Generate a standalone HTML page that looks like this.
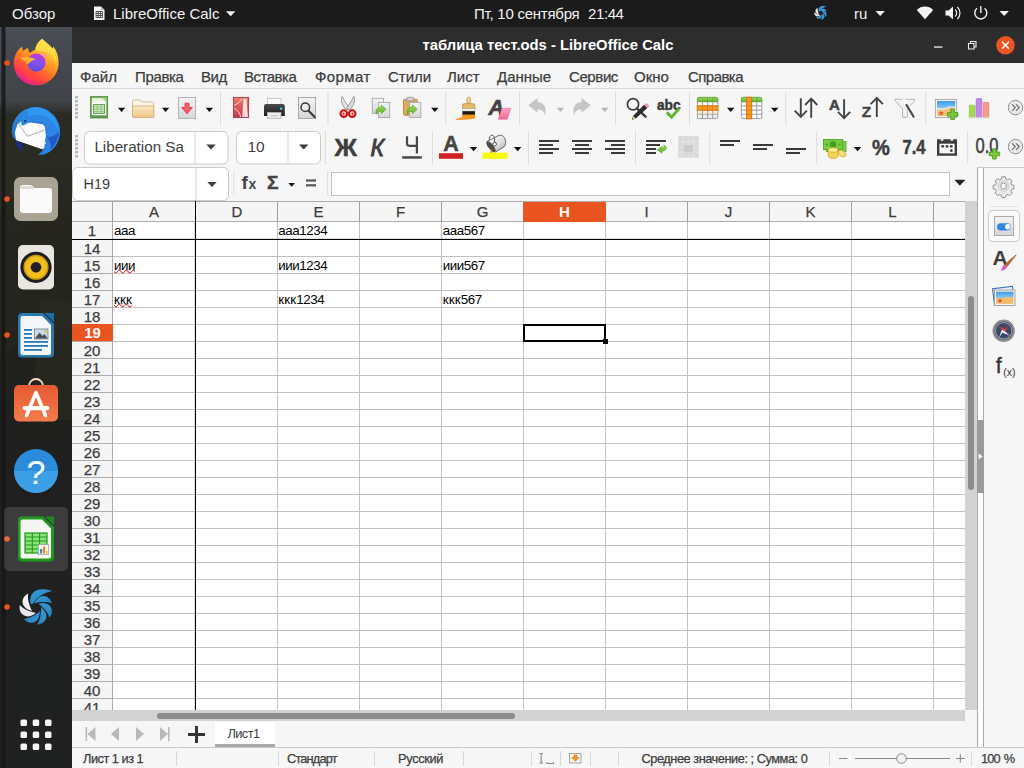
<!DOCTYPE html>
<html lang="ru"><head><meta charset="utf-8"><title>таблица тест.ods - LibreOffice Calc</title>
<style>
*{box-sizing:border-box;margin:0;padding:0}
html,body{width:1024px;height:768px;overflow:hidden;background:#2a2a2a;font-family:"Liberation Sans",sans-serif;}
body{position:relative}
.a{position:absolute}
svg{position:absolute;overflow:visible}
#topbar{position:absolute;left:0;top:0;width:1024px;height:27px;background:#1b1b1b;color:#f2f2f2;font-size:15px}
#topbar span{position:absolute;top:5px;white-space:nowrap}
#dock{position:absolute;left:0;top:27px;width:72px;height:741px;overflow:hidden;background:linear-gradient(#3b3f44 0px,#35383b 80px,#2b2c2a 180px,#282826 400px,#232323 741px)}
#title{position:absolute;left:72px;top:27px;width:952px;height:36px;background:#2e2d2d;color:#fff;font-weight:bold;font-size:14.8px;text-align:center;line-height:36px}
#menubar{position:absolute;left:72px;top:63px;width:952px;height:26px;background:#f6f6f6;border-bottom:1px solid #dcdad8;color:#3d3d3d;font-size:15px}
#menubar span{position:absolute;top:5px;white-space:nowrap}
#chrome{position:absolute;left:72px;top:89px;width:952px;height:679px;background:#f6f6f6}
/* grid */
#grid{position:absolute;left:72px;top:201px;width:893px;height:509px;background:#fff;overflow:hidden}
#colhdr{position:absolute;left:0;top:0;width:893px;height:21px;background:#f5f5f5;border-top:1px solid #acacac;border-bottom:1px solid #acacac}
#rowhdr{position:absolute;left:0;top:20px;width:41px;height:509px;background:#f5f5f5;border-right:1px solid #acacac}
.ch,.rh,#menubar span,#status span{-webkit-text-stroke:0.25px #3d3d3d}
.ch.sel,.rh.sel{-webkit-text-stroke:0}
.ch{position:absolute;top:0;height:19px;line-height:19px;text-align:center;font-size:15px;color:#3d3d3d}
.rh{position:absolute;left:0;width:40px;height:16px;line-height:17px;text-align:center;font-size:15px;color:#3d3d3d}
.vl{position:absolute;top:0;width:1px;height:509px;background:#c0c0c0}
.hl{position:absolute;left:0;height:1px;width:893px;background:#c0c0c0}
.ct{position:absolute;letter-spacing:-0.42px;font-size:13.33px;color:#000;white-space:nowrap;line-height:16px;height:16px}
.kk{letter-spacing:0.17px}
.sq{text-decoration:underline wavy #e00000 1px;text-underline-offset:-0.8px;text-decoration-skip-ink:none}
.sel{background:#e95420;color:#fff;font-weight:bold}
.sp{position:absolute;top:3px;width:1px;height:15px;background:#dadada}
</style></head><body>
<div id="topbar">
<span style="left:12px">Обзор</span>
<span style="left:113px">LibreOffice Calc</span>
<span style="left:474px;letter-spacing:-0.25px">Пт, 10 сентября</span><span style="left:588px;letter-spacing:-0.4px">21:44</span>
<span style="left:854px">ru</span>
<svg style="left:0;top:0" width="1024" height="27" viewBox="0 0 1024 27">
<path d="M94 6.500h7l3.500 3.500v10h-10.500z" fill="#f4f4f4"/><path d="M101 6.500l3.500 3.500h-3.500z" fill="#bdbdbd"/>
<path d="M96 11.500h6.500v6h-6.500zM96 13.500h6.500M96 15.500h6.500M98.200 11.500v6M100.400 11.500v6" fill="none" stroke="#333" stroke-width="0.800"/>
<path d="M226 11.300h9.400l-4.700 5z" fill="#f2f2f2"/>
<path d="M875.500 11h9.400l-4.700 5z" fill="#f2f2f2"/>
<path d="M999.500 11h9.400l-4.700 5z" fill="#f2f2f2"/>
<!-- shutter tray -->
<g transform="translate(820.600 13.200) scale(0.380)">
<path d="M-5.300 -3.800C-7 -9 -5 -15 0 -17.500C5 -19.500 11 -19 15.900 -16.900C9 -15.500 2 -12 -3 -4.500Z" fill="#3a9ad6"/>
<g id="bl2"><path d="M-1.900 -4.600C0 -9 4 -12.500 8 -12C12 -11.500 15 -8.500 15.900 -4.400C12 -6.300 5 -6.500 -1.900 -4.600Z"/></g>
<use href="#bl2" fill="#3a9ad6"/><use href="#bl2" fill="#3a9ad6" transform="rotate(51.430)"/><use href="#bl2" fill="#3a9ad6" transform="rotate(102.860)"/><use href="#bl2" fill="#3a9ad6" transform="rotate(154.290)"/>
<use href="#bl2" fill="#e6e6ea" transform="rotate(205.710)"/><use href="#bl2" fill="#f2f2f4" transform="rotate(257.140)"/>
</g>
<!-- wifi -->
<path d="M925 19.300l-8.200-9.300a11.500 11.500 0 0 1 16.400 0z" fill="#f2f2f2"/>
<!-- speaker -->
<path d="M945.500 10.500h3l4.500-4v13l-4.500-4h-3z" fill="#f2f2f2"/>
<path d="M955 9.500a4.500 4.500 0 0 1 0 7M957.300 7a8 8 0 0 1 0 12" fill="none" stroke="#f2f2f2" stroke-width="1.200"/>
<!-- power -->
<path d="M977 8.300a6 6 0 1 0 7.600 0" fill="none" stroke="#f2f2f2" stroke-width="1.400"/><path d="M980.800 6v7" stroke="#f2f2f2" stroke-width="1.400"/>
</svg>
</div>
<div id="dock">
<svg style="left:0;top:0" width="72" height="741" viewBox="0 27 72 741">
<defs>
<linearGradient id="wp" x1="0" y1="0" x2="0" y2="1"><stop offset="0" stop-color="#494d54"/><stop offset="0.100" stop-color="#404348"/><stop offset="0.118" stop-color="#2b2d27"/><stop offset="0.300" stop-color="#24251f"/><stop offset="0.550" stop-color="#1f201e"/><stop offset="1" stop-color="#202122"/></linearGradient>
<linearGradient id="ffg" x1="0.850" y1="0.100" x2="0.300" y2="1"><stop offset="0" stop-color="#ffe84e"/><stop offset="0.300" stop-color="#ffb02a"/><stop offset="0.550" stop-color="#ff7a22"/><stop offset="0.800" stop-color="#ff3a48"/><stop offset="1" stop-color="#ec1e9a"/></linearGradient>
<linearGradient id="ffp" x1="0.600" y1="0" x2="0.400" y2="1"><stop offset="0" stop-color="#c233dd"/><stop offset="0.450" stop-color="#8a50f2"/><stop offset="1" stop-color="#5a4ad8"/></linearGradient>
<linearGradient id="tbg" x1="0.300" y1="0" x2="0.600" y2="1"><stop offset="0" stop-color="#2f8ee0"/><stop offset="1" stop-color="#1a4fb0"/></linearGradient>
<linearGradient id="swg" x1="0" y1="0" x2="0" y2="1"><stop offset="0" stop-color="#e65a30"/><stop offset="1" stop-color="#f27c4c"/></linearGradient>
<linearGradient id="shg" x1="0" y1="0" x2="1" y2="1"><stop offset="0" stop-color="#3a9cd6"/><stop offset="1" stop-color="#2380bc"/></linearGradient>
</defs>
<rect x="0" y="27" width="72" height="741" fill="url(#wp)"/>
<path d="M0 118c20-6 45-10 72-4v40c-30 10-50 30-72 60z" fill="#2a2c24"/>
<path d="M0 240l72-40v90l-72 70z" fill="#26271f" opacity="0.700"/>
<path d="M40 300h32v120h-40z" fill="#2b2d20" opacity="0.500"/>
<rect x="1.500" y="27" width="4" height="741" fill="#161616" opacity="0.850"/>
<!-- running dots -->
<g fill="#e95420"><circle cx="7" cy="63" r="2.800"/><circle cx="7" cy="199" r="2.800"/><circle cx="7" cy="335" r="2.800"/><circle cx="7" cy="539" r="2.800"/><circle cx="7" cy="607" r="2.800"/></g>
<!-- firefox -->
<path d="M42.300 38.700C45 42 50 45 52.500 48.600C53.300 48.300 53.200 47.300 53 46.300C57 51 58.600 57 58.600 63C58.600 75.500 48.500 85.200 36.100 85.200C23.500 85.200 13.800 75.500 13.800 63.200C13.800 56 17 50 22.200 46.400C22.400 48.500 22.800 50 23.300 51.100C24.500 49.500 26 48.500 28 47.900C28.300 50 29 51.500 29.900 53C31.500 51.500 33.500 50.300 35.400 49.700C35.500 45.500 38.500 41.500 42.300 38.700Z" fill="url(#ffg)"/>
<path d="M42.300 38.700C45 42 50 45 52.500 48.600C55.500 53 57 58 56 64C54 56 49 51 44 51.500C40 52 36 51 35.400 49.700C35.500 45.500 38.500 41.500 42.300 38.700Z" fill="#ffe14a" opacity="0.750"/>
<circle cx="36.400" cy="62.600" r="9.200" fill="url(#ffp)"/>
<path d="M20 58.300C24 56.300 30 56.800 35.900 59.200C32.500 60 29.500 62 27.300 64.800C26 62 23.500 59.800 20 58.300Z" fill="#ffb52e"/>
<path d="M27.300 64.800C25.500 69 28 74.500 34 76.300C40 77.800 46 74 47.300 68C47 74.500 42 80 35 80C27 80 21.500 73.500 22.500 66C23 63 24.500 60.500 27 59.500C28.500 60.500 28 62.500 27.300 64.800Z" fill="#ff5a30" opacity="0.350"/>
<path d="M40 54.200C42.500 53.600 45 54.600 46.500 56.200L42.500 56.500Z" fill="#ff8adc"/>
<!-- thunderbird -->
<path d="M12.600 137A24 24 0 1 1 38 154.900L43.500 149L16 140Z" fill="url(#tbg)"/>
<path d="M15.300 141C16.300 146 19 149.500 22.800 150.500L21.500 144Z" fill="#1b2c94"/>
<path d="M17.500 124.200L21.500 121.200L43 124.200L45 127L46.800 143.800L43 149.400L16 140.200L14.900 132.200Z" fill="#fdfdff"/>
<path d="M19 124.300L27.300 136.200L44.500 130.400" fill="none" stroke="#a9a196" stroke-width="0.900"/>
<path d="M21.900 125.600C20.500 121 21.500 115 25.500 111C30 107 38 106.500 45 109.500C54 113.500 60 122 60 132C60 142 54 151 44 154.500L38 154.900C42 152.500 44.500 149.500 45.500 146.500C43.500 147.500 44.500 144.500 46 142.500C44.500 142.500 44.500 140 46 137C47.500 131 45.500 125 41 122.500C36 120.500 30 121.500 26 124C24.500 125 23 125.800 21.900 125.600Z" fill="#2b86e4"/>
<path d="M30 108.100C36 106 44 108 50 113C56 118.500 59.500 126 59 134C57 126 52 119.500 45 116.500C39 114 33 114.500 28.500 117C27 114 28 110.500 30 108.100Z" fill="#2f9cf0" opacity="0.850"/>
<path d="M46 137C49 139 52 144 50 150C54.500 146 58.500 139 59 132C55 136 50 137.500 46 137Z" fill="#1d4fc0" opacity="0.800"/>
<circle cx="25.300" cy="120.900" r="1" fill="#0a1f4a"/>
<!-- files -->
<rect x="14" y="177" width="44" height="44" rx="6.500" fill="#a9a394"/>
<path d="M20 188q0-3 3-3h7q2 0 3 1.500l1 1.500h15q3 0 3 3v19q0 3-3 3h-26q-3 0-3-3z" fill="#fafafa"/>
<path d="M20 189q0-3 3-3h7q2 0 3 1.500l1 1.500h-14z" fill="#e0ddd4"/>
<!-- rhythmbox -->
<rect x="18" y="245" width="36" height="44.500" rx="5" fill="#e8e6df"/>
<circle cx="36" cy="267.300" r="15.600" fill="#1d1d22"/>
<circle cx="36" cy="267.300" r="11.800" fill="#f2c01e"/>
<circle cx="36" cy="267.300" r="11.800" fill="none" stroke="#c89a10" stroke-width="1.500"/>
<circle cx="36" cy="267.300" r="5.300" fill="#222226"/>
<!-- writer -->
<path d="M22 313h21l11 11v29.500q0 4-4 4h-28q-4 0-4-4v-36.500q0-4 4-4z" fill="#2678ae"/>
<path d="M22.500 316h19.500l9 9v28q0 2-2 2h-26.500q-2 0-2-2v-35q0-2 2-2z" fill="#f4f8fb"/>
<path d="M44.500 313h9.500v9.500z" fill="#1c6aa6"/>
<g fill="#2a78b0"><rect x="24" y="329" width="8" height="1.800"/><rect x="24" y="333" width="8" height="1.800"/><rect x="24" y="337" width="8" height="1.800"/><rect x="24" y="341" width="24" height="1.800"/><rect x="24" y="345" width="24" height="1.800"/><rect x="24" y="349" width="18" height="1.800"/></g>
<rect x="34.500" y="329" width="13.500" height="10" fill="#c9dcea" stroke="#5a6a78" stroke-width="0.700"/>
<path d="M35 338.500l4.500-6l3 3.500l2-2l3.200 4.500z" fill="#4a4f55"/><circle cx="45.500" cy="331.500" r="1.200" fill="#f2c01e"/>
<!-- software -->
<path d="M29 387v-1a7 7 0 0 1 14 0v1" fill="none" stroke="#f6dcc0" stroke-width="1.800"/>
<rect x="14" y="385" width="44" height="36.500" rx="5" fill="url(#swg)"/>
<path d="M36 392.500l-9.500 23M36 392.500l9.500 23" stroke="#fff" stroke-width="3.600" fill="none" stroke-linecap="round"/>
<rect x="22.500" y="406" width="27" height="4.200" rx="2.100" fill="#fff"/>
<!-- help -->
<circle cx="36" cy="471" r="22" fill="#2a8cda"/>
<path d="M14 471a22 22 0 0 0 44 0z" fill="#3d9fe6"/>
<text x="36" y="484" text-anchor="middle" font-family="Liberation Sans,sans-serif" font-size="34" fill="#fff">?</text>
<!-- calc (active) -->
<rect x="4" y="507" width="64" height="64" rx="5" fill="#fff" fill-opacity="0.130"/>
<path d="M22 516.500h21l11 11v30q0 4-4 4h-28q-4 0-4-4v-37q0-4 4-4z" fill="#1f9a1c"/>
<path d="M22.500 519.500h19.500l9 9v28q0 2-2 2h-26.500q-2 0-2-2v-35q0-2 2-2z" fill="#f3f6f1"/>
<path d="M45 516.500h9v9z" fill="#1a8a18"/>
<rect x="25" y="533" width="22" height="20" fill="#8ee07a" stroke="#1f9a1c" stroke-width="1.200"/>
<path d="M25 537h22M25 541h22M25 545h22M25 549h22M32.300 533v20M39.600 533v20" stroke="#1f9a1c" stroke-width="1.100"/>
<rect x="38.500" y="544.500" width="10" height="10" fill="#f4f4f4" stroke="#9a9a9a" stroke-width="0.700"/>
<rect x="40" y="549" width="2.200" height="4.500" fill="#2a8cda"/><rect x="43" y="546.500" width="2.200" height="7" fill="#f08a10"/><rect x="46" y="551" width="1.600" height="2.500" fill="#f2c01e"/>
<!-- shutter -->
<g transform="translate(36.100 608)">
<path d="M-5.300 -3.800C-7 -9 -5 -15 0 -17.500C5 -19.500 11 -19 15.900 -16.900C9 -15.500 2 -12 -3 -4.500Z" fill="url(#shg)"/>
<g id="bl"><path d="M-1.900 -4.600C0 -9 4 -12.500 8 -12C12 -11.500 15 -8.500 15.900 -4.400C12 -6.300 5 -6.500 -1.900 -4.600Z"/></g>
<use href="#bl" fill="url(#shg)"/><use href="#bl" fill="url(#shg)" transform="rotate(51.430)"/><use href="#bl" fill="url(#shg)" transform="rotate(102.860)"/><use href="#bl" fill="url(#shg)" transform="rotate(154.290)"/>
<use href="#bl" fill="#e6e6ea" transform="rotate(205.710)"/><use href="#bl" fill="#f2f2f4" transform="rotate(257.140)"/>
</g>
<!-- apps grid -->
<g fill="#f4f4f4"><rect x="20.500" y="719.500" width="6.500" height="6.500" rx="1.500"/><rect x="32.700" y="719.500" width="6.500" height="6.500" rx="1.500"/><rect x="45" y="719.500" width="6.500" height="6.500" rx="1.500"/><rect x="20.500" y="731.500" width="6.500" height="6.500" rx="1.500"/><rect x="32.700" y="731.500" width="6.500" height="6.500" rx="1.500"/><rect x="45" y="731.500" width="6.500" height="6.500" rx="1.500"/><rect x="20.500" y="743.500" width="6.500" height="6.500" rx="1.500"/><rect x="32.700" y="743.500" width="6.500" height="6.500" rx="1.500"/><rect x="45" y="743.500" width="6.500" height="6.500" rx="1.500"/></g>
</svg>
</div>
<div id="title">таблица тест.ods - LibreOffice Calc</div>
<div id="menubar">
<span style="left:8px">Файл</span><span style="left:63px;letter-spacing:-0.35px">Правка</span><span style="left:129px;letter-spacing:-0.4px">Вид</span><span style="left:172px;letter-spacing:-0.5px">Вставка</span><span style="left:243px;letter-spacing:0.4px">Формат</span><span style="left:316px">Стили</span><span style="left:375px">Лист</span><span style="left:425px">Данные</span><span style="left:497px;letter-spacing:-0.4px">Сервис</span><span style="left:562px">Окно</span><span style="left:616px;letter-spacing:-0.55px">Справка</span>
</div>
<svg style="left:920px;top:27px" width="104" height="36" viewBox="920 27 104 36">
<rect x="934" y="46.400" width="8.500" height="1.300" fill="#f0f0f0"/>
<path d="M968.500 43.500h5.500v5.500h-5.500zM970.500 43.500v-2h5.500v5.500h-2" fill="none" stroke="#f0f0f0" stroke-width="1.100"/>
<circle cx="1005.500" cy="45.300" r="9.300" fill="#e95420"/>
<path d="M1002 41.800l7 7M1009 41.800l-7 7" stroke="#fff" stroke-width="1.500"/>
</svg>
<div id="chrome"></div>
<svg id="tb" style="left:72px;top:89px" width="952" height="112" viewBox="72 89 952 112">
<defs>
<linearGradient id="gGreen" x1="0" y1="0" x2="0" y2="1"><stop offset="0" stop-color="#9be05a"/><stop offset="1" stop-color="#5fae2c"/></linearGradient>
<linearGradient id="gFold" x1="0" y1="0" x2="0" y2="1"><stop offset="0" stop-color="#fbe8c4"/><stop offset="1" stop-color="#eec58a"/></linearGradient>
<linearGradient id="gGrey" x1="0" y1="0" x2="0" y2="1"><stop offset="0" stop-color="#f4f4f4"/><stop offset="1" stop-color="#d6d6d6"/></linearGradient>
<linearGradient id="gPdf" x1="0" y1="0" x2="0" y2="1"><stop offset="0" stop-color="#ee7a66"/><stop offset="1" stop-color="#c5384a"/></linearGradient>
<linearGradient id="gPrn" x1="0" y1="0" x2="0" y2="1"><stop offset="0" stop-color="#4a4a4a"/><stop offset="1" stop-color="#1c1c1c"/></linearGradient>
<linearGradient id="gPink" x1="0" y1="0" x2="0" y2="1"><stop offset="0" stop-color="#ffa3c4"/><stop offset="1" stop-color="#f0699c"/></linearGradient>
<linearGradient id="gSky" x1="0" y1="0" x2="0" y2="1"><stop offset="0" stop-color="#3d9be9"/><stop offset="1" stop-color="#8ccbf5"/></linearGradient>
<linearGradient id="gDoc" x1="0" y1="0" x2="0" y2="1"><stop offset="0" stop-color="#d4e9c6"/><stop offset="0.350" stop-color="#ffffff"/><stop offset="1" stop-color="#ffffff"/></linearGradient>
<linearGradient id="gCan" x1="0.200" y1="0" x2="0.900" y2="0.800"><stop offset="0" stop-color="#fafafa"/><stop offset="0.600" stop-color="#e2e2e2"/><stop offset="1" stop-color="#bcbcbc"/></linearGradient>
<path id="dd" d="M-3.7 -2.1h7.4l-3.7 4.3z"/>
<g id="garrow"><path d="M0 0c3.5-3 8-2.5 10 0.500l1.800-1.800l0.300 6.500l-6.500-0.300l1.900-1.900c-1.500-2.200-4.500-2.800-7.500-3z" fill="url(#gGreen)" stroke="#4e9a1e" stroke-width="0.600"/></g>
</defs>
<!-- ===== row 1 ===== -->
<g id="row1">
<g fill="#b9b9b9"><rect x="75" y="96" width="3" height="2.500"/><rect x="75" y="100" width="3" height="2.500"/><rect x="75" y="104" width="3" height="2.500"/><rect x="75" y="108" width="3" height="2.500"/><rect x="75" y="112" width="3" height="2.500"/><rect x="75" y="116" width="3" height="2.500"/></g>
<!-- new spreadsheet -->
<rect x="90.900" y="96.900" width="16.300" height="20.700" fill="url(#gDoc)" stroke="#5b9648" stroke-width="1.700"/>
<path d="M101.800 97.700h4.700v4.700z" fill="#a9cf93"/>
<rect x="93.600" y="104.600" width="11" height="8.800" fill="#e2f4d6" stroke="#62a04a" stroke-width="1.100"/>
<path d="M93.600 106.900h11M93.600 109.100h11M93.600 111.300h11M97.300 104.600v8.800M101 104.600v8.800" stroke="#7db567" stroke-width="0.800"/>
<rect x="91.700" y="115.300" width="14.700" height="2" fill="#5b9648"/>
<use href="#dd" x="121.600" y="109.900" fill="#111"/>
<!-- folder -->
<path d="M132.500 101.500q0-1.500 1.500-1.500h5.500q1.200 0 1.500 1l0.400 1h11q1.300 0 1.300 1.300v13q0 1.200-1.200 1.200h-18.800q-1.200 0-1.200-1.200z" fill="#fdf6e8" stroke="#c8b48e" stroke-width="0.900"/>
<path d="M132.500 106h21.200v10.300q0 1.200-1.200 1.200h-18.800q-1.200 0-1.200-1.200z" fill="url(#gFold)" stroke="#d2b07a" stroke-width="0.900"/>
<use href="#dd" x="165.600" y="109.900" fill="#111"/>
<!-- save -->
<rect x="178.500" y="97.500" width="17" height="21" fill="url(#gGrey)" stroke="#b4b4b4" stroke-width="1"/>
<path d="M185 103.200h4v4.300h3.300l-5.300 6.300l-5.300-6.300h3.300z" fill="#f0606a" stroke="#d83a48" stroke-width="0.900" stroke-linejoin="round"/>
<use href="#dd" x="209.400" y="109.900" fill="#111"/>
<rect x="220" y="92" width="1" height="33" fill="#dcdcdc"/>
<!-- pdf -->
<rect x="233.500" y="97.400" width="15.100" height="20.100" fill="url(#gPdf)" stroke="#b23245" stroke-width="0.900"/>
<path d="M234.200 105.200C237.500 104 240.500 101.500 241.900 98.800M234.200 108.400C237.500 110 240 113 240.700 117.100" stroke="#fff" stroke-opacity="0.850" fill="none" stroke-width="0.900"/>
<path d="M243.500 98.800h2.900l1.600 18.300h-5.800z" fill="#fff" fill-opacity="0.800"/>
<!-- printer -->
<rect x="267.500" y="98.300" width="13.500" height="7" fill="#fafafa" stroke="#bdbdbd" stroke-width="0.800"/>
<path d="M266 104h16.500q2.300 0 2.300 2.300v9.600h-20.800v-9.600q0-2.300 2-2.300z" fill="url(#gPrn)"/>
<rect x="267.500" y="112.500" width="13.500" height="6" fill="#ececec" stroke="#b5b5b5" stroke-width="0.800"/>
<rect x="270.500" y="115.300" width="7.500" height="1" fill="#bdbdbd"/>
<rect x="280" y="107.500" width="2.300" height="2.300" fill="#35c4ee"/>
<!-- preview -->
<rect x="298.500" y="97.500" width="17" height="21" fill="url(#gGrey)" stroke="#a9a9a9" stroke-width="1"/>
<circle cx="305.300" cy="107.300" r="4.300" fill="#ebebeb" stroke="#3a3a3a" stroke-width="1.500"/>
<path d="M308.600 110.700l6 6.200" stroke="#3a3a3a" stroke-width="2.200" stroke-linecap="round"/>
<rect x="327.500" y="92" width="1" height="33" fill="#dcdcdc"/>
<!-- scissors -->
<path d="M342.300 96.300C340.600 99.500 341 103.500 346.300 110.300L349.600 108.200C346.200 104 343.800 100 342.300 96.300Z" fill="#e6e6e6" stroke="#8a8a8a" stroke-width="0.800" stroke-linejoin="round"/>
<path d="M353.700 96.300C355.400 99.500 355 103.500 349.700 110.300L346.400 108.200C349.800 104 352.200 100 353.700 96.300Z" fill="#dadada" stroke="#8a8a8a" stroke-width="0.800" stroke-linejoin="round"/>
<circle cx="343.800" cy="113.600" r="3.300" fill="#f6dada" stroke="#cc1616" stroke-width="2.100"/>
<circle cx="352.200" cy="113.600" r="3.300" fill="#f6dada" stroke="#cc1616" stroke-width="2.100"/>
<path d="M342.800 112.300l2.200 1.300l-2.200 1.300zM353.200 112.300l-2.200 1.300l2.200 1.300z" fill="#cc1616"/>
<!-- copy -->
<rect x="372.300" y="98.300" width="11.200" height="15" fill="url(#gGrey)" stroke="#a9a9a9" stroke-width="0.900"/>
<rect x="378.500" y="102.500" width="11.200" height="15" fill="url(#gGrey)" stroke="#a9a9a9" stroke-width="0.900"/>
<path d="M376.300 114.300c-1.500-4 1-7.500 5-7.200v-2.200l4.800 4.400l-4.800 4.400v-2.300c-2.200-0.300-4 0.700-5 2.900z" fill="url(#gGreen)" stroke="#56a526" stroke-width="0.600"/>
<!-- paste -->
<rect x="403.500" y="99.300" width="14" height="16" rx="1.200" fill="#dfa95a" stroke="#b98742" stroke-width="0.900"/>
<rect x="407" y="97.300" width="7" height="3.600" rx="1" fill="#d2d2d2" stroke="#8f8f8f" stroke-width="0.800"/>
<rect x="409.600" y="102.500" width="11.200" height="15" fill="url(#gGrey)" stroke="#a9a9a9" stroke-width="0.900"/>
<path d="M407.500 114.300c-1.500-4 1-7.500 5-7.200v-2.200l4.800 4.400l-4.800 4.400v-2.300c-2.200-0.300-4 0.700-5 2.900z" fill="url(#gGreen)" stroke="#56a526" stroke-width="0.600"/>
<use href="#dd" x="434.800" y="109.900" fill="#111"/>
<rect x="445.300" y="92" width="1" height="33" fill="#dcdcdc"/>
<!-- clone brush -->
<path d="M467 99.500a1.800 1.800 0 1 1 3.400 0l-0.300 4.300h-2.800z" fill="#f1cf8c" stroke="#b9904a" stroke-width="0.800"/>
<path d="M462.500 105.500q0-1.800 1.800-1.800h8.800q1.800 0 1.800 1.800v3.200h-12.400z" fill="#e9b968" stroke="#b9904a" stroke-width="0.800"/>
<rect x="462.400" y="108.600" width="12.600" height="2.600" fill="#f3efe6" stroke="#b0a58c" stroke-width="0.500"/>
<rect x="462.400" y="111.200" width="12.600" height="3.800" fill="#1c1a18"/>
<path d="M462.400 114.800h12.600v3.200c-4 1.300-9 1.200-13.500 1.400c-2.500 0.200-4.500 0.300-5.600 0c1.500-1.300 4.500-1.200 6.500-2z" fill="#f59a1c" stroke="#e0800e" stroke-width="0.500"/>
<!-- clear formatting -->
<text x="488.500" y="115" font-family="Liberation Sans,sans-serif" font-weight="bold" font-style="italic" font-size="21.500" fill="#454545" stroke="#454545" stroke-width="0.700">A</text>
<path d="M502 108.300h8.600l-3.300 10.900h-8.900z" fill="url(#gPink)" stroke="#e85a90" stroke-width="0.600"/>
<rect x="519" y="92" width="1" height="33" fill="#dcdcdc"/>
<!-- undo / redo -->
<path id="undo" d="M528.300 105.300l9.300-7.200v4.200c6.500 0.200 9.800 5.500 7.300 13.300c-0.800-4.500-3-6.200-7.300-6.200v3.300z" fill="#c6c6c6"/>
<use href="#dd" x="560.500" y="109.800" fill="#b5b5b5"/>
<use href="#undo" transform="translate(1119.100 0) scale(-1 1)"/>
<use href="#dd" x="604.700" y="109.800" fill="#b5b5b5"/>
<rect x="615" y="92" width="1" height="33" fill="#dcdcdc"/>
<!-- find & replace -->
<circle cx="633" cy="104.300" r="5.600" fill="#fafafa" stroke="#3a3a3a" stroke-width="1.700"/>
<path d="M637 108.500l8.600 8.200" stroke="#3a3a3a" stroke-width="2.400" stroke-linecap="round"/>
<path d="M644 104.700l3.300 3.200l-11.500 10.700l-3.600 1l0.800-3.700z" fill="#2c2c2c"/>
<path d="M644.200 104.500l1.200-1q1-0.700 1.900 0.200l1.400 1.400q0.800 1 0 1.800l-1.200 1.100z" fill="#f08fc0"/>
<path d="M632.200 119.600l0.800-3.700l2.800 2.700z" fill="#e8d27a"/><path d="M632.200 119.600l0.300-1.600l1.200 1.200z" fill="#222"/>
<!-- spelling -->
<text x="657" y="109.500" font-family="Liberation Sans,sans-serif" font-weight="bold" font-size="15.500" fill="#3a3a3a" stroke="#3a3a3a" stroke-width="0.500" textLength="23.500" lengthAdjust="spacingAndGlyphs">abc</text>
<path d="M666.800 112.300l4.800 4.800l8-9" fill="none" stroke="#5cb32c" stroke-width="2.800"/>
<rect x="689" y="92" width="1" height="33" fill="#dcdcdc"/>
<!-- rows -->
<g id="tbl"><rect x="697.400" y="97.400" width="20.400" height="21.200" rx="1.500" fill="#fff" stroke="#9e9e9e" stroke-width="1"/>
<path d="M697.400 101.600h20.400M697.400 105.900h20.400M697.400 110.100h20.400M697.400 114.300h20.400M702.500 97.400v21.200M707.600 97.400v21.200M712.700 97.400v21.200" stroke="#a6a6a6" stroke-width="1.100" fill="none"/>
<path d="M698.900 97.400h17.400q1.500 0 1.500 1.500v2.700h-20.400v-2.700q0-1.500 1.500-1.500z" fill="url(#gGreen)" stroke="#62ab36" stroke-width="0.800"/>
<path d="M702.500 97.600v4M707.600 97.600v4M712.700 97.600v4" stroke="#5ea832" stroke-width="0.800"/></g>
<rect x="698.200" y="110.700" width="18.800" height="3.100" fill="#f79a22" fill-opacity="0.180"/><rect x="698.200" y="114.900" width="18.800" height="3.100" fill="#000" fill-opacity="0.070"/><rect x="742.200" y="114.900" width="18.800" height="3.100" fill="#000" fill-opacity="0.070"/>
<rect x="697.200" y="105.800" width="20.800" height="4.400" fill="#f79a22" stroke="#dc750c" stroke-width="0.900"/>
<path d="M702.500 106v4M707.600 106v4M712.700 106v4" stroke="#dc750c" stroke-width="0.800"/>
<use href="#dd" x="730.700" y="109.900" fill="#111"/>
<use href="#tbl" x="44" y="0"/>
<rect x="746.500" y="97.200" width="5.200" height="21.600" fill="#f79a22" stroke="#dc750c" stroke-width="0.900"/>
<path d="M746.500 101.600h5.200M746.500 105.900h5.200M746.500 110.100h5.200M746.500 114.300h5.200" stroke="#dc750c" stroke-width="0.800"/>
<use href="#dd" x="774.700" y="109.900" fill="#111"/>
<rect x="785.200" y="92" width="1" height="33" fill="#dcdcdc"/>
<!-- sort -->
<g fill="none" stroke="#444" stroke-width="1.900">
<path d="M800.800 98.300v18.500M794.700 110.700l6.100 6.300l6.100-6.300"/>
<path d="M811.200 117.800v-18.500M805.100 105l6.100-6.300l6.100 6.300"/>
<path d="M844.100 99.300v18.500M838 111.800l6.100 6.300l6.100-6.300"/>
<path d="M876.800 116.900v-18.500M870.700 104.200l6.100-6.300l6.100 6.300"/>
</g>
<text x="829" y="109.500" font-family="Liberation Sans,sans-serif" font-weight="bold" font-size="15" fill="#444" stroke="#444" stroke-width="0.500">A</text>
<text x="861.700" y="117.300" font-family="Liberation Sans,sans-serif" font-weight="bold" font-size="15.500" fill="#444" stroke="#444" stroke-width="0.400">Z</text>
<!-- autofilter -->
<path d="M895.200 99.300h19.400v1.500l-7.300 8v8.500h-4.800v-8.500l-7.300-8z" fill="#f2f2f2" stroke="#b0b0b0" stroke-width="0.900"/>
<path d="M903 99l10.500 17.500" stroke="#fff" stroke-width="3.400"/>
<path d="M906.500 105l7 11.500" stroke="#4a4a4a" stroke-width="2.300" stroke-linecap="round"/>
<rect x="925.200" y="92" width="1" height="33" fill="#dcdcdc"/>
<!-- image -->
<rect x="935.400" y="99.400" width="21.300" height="18.100" fill="#f4f4f4" stroke="#a7a7a7" stroke-width="0.900"/>
<rect x="937" y="101" width="18.200" height="15" fill="#f1c27a"/>
<path d="M937 101h18.200v6.500c-3 1.500-5-1-8 0.300s-6 1.800-10.200 0.700z" fill="url(#gSky)"/>
<path d="M937 108.500c4 1.200 7 0.600 10.200-0.700s5-1.200 8-0.300" fill="none" stroke="#fff" stroke-width="1"/>
<path d="M941 110.500l0.800 1.800h1.900l-1.500 1.300l0.600 2l-1.800-1.200l-1.800 1.200l0.600-2l-1.500-1.300h1.900z" fill="#e8501c"/>
<path d="M950.800 109.200h3.600v3.400h3.500v3.600h-3.500v3.400h-3.600v-3.400h-3.400v-3.600h3.400z" fill="#7cc83c" stroke="#4e9a1e" stroke-width="0.900"/>
<!-- chart -->
<rect x="969.400" y="105.200" width="5.600" height="12.400" rx="1" fill="#9fdc50" stroke="#7cc23a" stroke-width="0.700"/>
<rect x="976.200" y="98.600" width="5.600" height="19" rx="1" fill="#c487f0" stroke="#a867dc" stroke-width="0.700"/>
<rect x="983.200" y="102.300" width="5.600" height="15.300" rx="1" fill="#f59c8c" stroke="#e67a6a" stroke-width="0.700"/>
<rect x="968" y="117.300" width="22" height="1.200" fill="#dedede"/>
<!-- more -->
<g id="more"><circle cx="1015.500" cy="107.600" r="7.200" fill="#ececec" stroke="#8e8e8e" stroke-width="1"/>
<path d="M1012 104.400l3.200 3.200l-3.200 3.200M1016 104.400l3.200 3.200l-3.200 3.200" fill="none" stroke="#6a6a6a" stroke-width="1.200"/></g>
</g>
<!-- ===== row 2 ===== -->
<g id="row2">
<g fill="#b9b9b9"><rect x="75" y="135" width="3" height="2.500"/><rect x="75" y="139" width="3" height="2.500"/><rect x="75" y="143" width="3" height="2.500"/><rect x="75" y="147" width="3" height="2.500"/><rect x="75" y="151" width="3" height="2.500"/><rect x="75" y="155" width="3" height="2.500"/></g>
<rect x="84.500" y="131.500" width="143.500" height="32.500" rx="5" fill="#fff" stroke="#cfcac6"/>
<rect x="194.500" y="132" width="1" height="32" fill="#d6d2ce"/>
<path d="M206.300 144.600h9.400l-4.700 5z" fill="#3d3d3d"/>
<text x="94.400" y="152.200" font-family="Liberation Sans,sans-serif" font-size="15.500" fill="#3d3d3d" textLength="89.500" lengthAdjust="spacingAndGlyphs">Liberation Sa</text>
<rect x="236.500" y="131.500" width="84" height="32.500" rx="5" fill="#fff" stroke="#cfcac6"/>
<rect x="287.500" y="132" width="1" height="32" fill="#d6d2ce"/>
<path d="M299 144.600h9.400l-4.700 5z" fill="#3d3d3d"/>
<text x="247.500" y="152.200" font-family="Liberation Sans,sans-serif" font-size="15.500" fill="#3d3d3d">10</text>
<rect x="325" y="131" width="1" height="33" fill="#dcdcdc"/>
<text x="334.500" y="155.700" font-family="Liberation Sans,sans-serif" font-weight="bold" font-size="23" fill="#3e3e3e" stroke="#3e3e3e" stroke-width="0.400" textLength="22.500" lengthAdjust="spacingAndGlyphs">Ж</text>
<text x="370.500" y="155.700" font-family="Liberation Sans,sans-serif" font-style="italic" font-size="23" fill="#3e3e3e" stroke="#3e3e3e" stroke-width="0.900">К</text>
<path d="M407 136.300v7.300q0 2.200 2.200 2.200h7.700M416.900 136.300v17.300" fill="none" stroke="#484848" stroke-width="2.200"/>
<rect x="402.200" y="156.200" width="19.600" height="2.500" fill="#484848"/>
<rect x="432" y="131" width="1" height="33" fill="#dcdcdc"/>
<text x="443.300" y="151.400" font-family="Liberation Sans,sans-serif" font-weight="bold" font-size="21.500" fill="#454545" stroke="#454545" stroke-width="0.500">A</text>
<rect x="439" y="153.200" width="24" height="5.600" fill="#d21f1f"/>
<use href="#dd" x="473.600" y="149.100" fill="#111"/>
<!-- bucket -->
<path d="M487.300 141.200L499 135.400C502.500 134.500 505 137 505.600 141.500C506 145 504.500 146.800 502.500 147.800L495.500 152C491 150 487 146 487.300 141.200Z" fill="url(#gCan)" stroke="#5a5a5a" stroke-width="0.900" stroke-linejoin="round"/>
<ellipse cx="491" cy="146.700" rx="6.300" ry="2.300" transform="rotate(52 491 146.700)" fill="#4c5049" stroke="#4a4a4a" stroke-width="0.700"/>
<path d="M490.300 148.300C491.200 149.800 492.300 151.300 493 153.200L490 153.200C490.600 151.500 490.600 150 490.300 148.300Z" fill="#f08a10"/>
<path d="M489.400 140.200C489 137.500 490 135.300 492 135.200C494 135.200 494.600 137 494.600 142" fill="none" stroke="#555" stroke-width="1"/>
<circle cx="494.600" cy="144.100" r="1.900" fill="#fff" stroke="#555" stroke-width="1"/>
<rect x="482.600" y="152.600" width="24.900" height="6.300" fill="#f9f910"/>
<use href="#dd" x="517.700" y="149.100" fill="#111"/>
<rect x="528" y="131" width="1" height="33" fill="#dcdcdc"/>
<g fill="#3a3a3a">
<rect x="539" y="140" width="20" height="2"/><rect x="539" y="144" width="14" height="2"/><rect x="539" y="148" width="20" height="2"/><rect x="539" y="152" width="14" height="2"/>
<rect x="572" y="140" width="20" height="2"/><rect x="575" y="144" width="14" height="2"/><rect x="572" y="148" width="20" height="2"/><rect x="575" y="152" width="14" height="2"/>
<rect x="605" y="140" width="20" height="2"/><rect x="611" y="144" width="14" height="2"/><rect x="605" y="148" width="20" height="2"/><rect x="611" y="152" width="14" height="2"/>
<rect x="646" y="140" width="20" height="2"/><rect x="646" y="144" width="14" height="2"/><rect x="646" y="148" width="10" height="2"/><rect x="646" y="152" width="10" height="2"/>
<rect x="720" y="140" width="20" height="2"/><rect x="720" y="144" width="14" height="2"/>
<rect x="753" y="144" width="20" height="2"/><rect x="753" y="148" width="14" height="2"/>
<rect x="786" y="148" width="20" height="2"/><rect x="786" y="152" width="14" height="2"/>
</g>
<rect x="635" y="131" width="1" height="33" fill="#dcdcdc"/>
<path d="M663.500 145c3.500 0.500 4.500 5.500-1.500 6.300v2l-4.800-3.500l4.800-3.600v2c2.500-0.300 2.800-2 1.500-3.200z" fill="url(#gGreen)" stroke="#56a526" stroke-width="0.600"/>
<!-- merge (disabled) -->
<rect x="678" y="136" width="20.800" height="21.800" rx="1.500" fill="#dadada"/>
<path d="M678 141.500h20.800M678 147h20.800M678 152.400h20.800M683.200 136v21.800M688.400 136v21.800M693.600 136v21.800" stroke="#e6e6e6" stroke-width="0.800"/>
<rect x="683.400" y="145" width="10" height="7.400" fill="#cdcdcd"/>
<rect x="709.200" y="131" width="1" height="33" fill="#dcdcdc"/>
<rect x="816.200" y="131" width="1" height="33" fill="#dcdcdc"/>
<!-- currency -->
<rect x="826.500" y="141.500" width="19.500" height="10" fill="#7ed046" stroke="#56ae2a" stroke-width="0.900"/>
<rect x="823.500" y="139.500" width="19.300" height="10" fill="#76cc40" stroke="#4ea626" stroke-width="0.900"/>
<circle cx="833" cy="144.500" r="3.200" fill="#3f9a20"/>
<rect x="826" y="143.700" width="1.600" height="1.600" fill="#3f9a20"/><rect x="838.800" y="143.700" width="1.600" height="1.600" fill="#3f9a20"/>
<ellipse cx="842" cy="153.500" rx="4.300" ry="2.800" transform="rotate(35 842 153.500)" fill="#f3de7e" stroke="#c9a52e" stroke-width="0.800"/>
<path d="M828.200 150v6.100c0 1.300 2.200 2.300 4.900 2.300s4.900-1 4.900-2.300v-6.100z" fill="#f0d452" stroke="#c9a52e" stroke-width="0.800"/>
<ellipse cx="833.100" cy="150" rx="4.900" ry="2.300" fill="#faeb90" stroke="#c9a52e" stroke-width="0.800"/>
<use href="#dd" x="857.600" y="149.100" fill="#111"/>
<text x="872" y="154.800" font-family="Liberation Sans,sans-serif" font-weight="bold" font-size="21.500" fill="#3e3e3e" stroke="#3e3e3e" stroke-width="0.500" textLength="17.800" lengthAdjust="spacingAndGlyphs">%</text>
<text x="902.500" y="154" font-family="Liberation Sans,sans-serif" font-weight="bold" font-size="19.500" fill="#3e3e3e" stroke="#3e3e3e" stroke-width="0.500" textLength="23" lengthAdjust="spacingAndGlyphs">7.4</text>
<!-- calendar -->
<path d="M937 139.200h3.800v1.600h2.600v-1.600h7.200v1.600h2.600v-1.600h3.800v16.600h-20z" fill="#3c3c3c"/>
<rect x="939.400" y="143.700" width="15.200" height="9.700" fill="#f8f8f8"/>
<circle cx="942.700" cy="146.300" r="1.400" fill="#3c3c3c"/><circle cx="947" cy="146.300" r="1.400" fill="#3c3c3c"/><circle cx="951.300" cy="146.300" r="1.400" fill="#3c3c3c"/><circle cx="951.300" cy="150.700" r="1.400" fill="#3c3c3c"/>
<rect x="967.200" y="131" width="1" height="33" fill="#dcdcdc"/>
<text x="975.500" y="153" font-family="Liberation Sans,sans-serif" font-size="21.500" fill="#3e3e3e" stroke="#3e3e3e" stroke-width="0.500" textLength="23" lengthAdjust="spacingAndGlyphs">0.0</text>
<path d="M992.600 148.800h3.600v3.300h3.500v3.600h-3.500v3.300h-3.600v-3.300h-3.400v-3.600h3.400z" fill="#7cc83c" stroke="#4e9a1e" stroke-width="0.900"/>
<use href="#more" y="39"/>
</g>
<!-- ===== formula bar ===== -->
<g id="fbar">
<rect x="72.500" y="167.500" width="156" height="33" rx="5" fill="#fff" stroke="#cfcac6"/>
<rect x="195.500" y="168" width="1" height="32" fill="#d6d2ce"/>
<path d="M207.300 182h9.400l-4.700 5z" fill="#3d3d3d"/>
<text x="83.500" y="188.800" font-family="Liberation Sans,sans-serif" font-size="15" fill="#3d3d3d" textLength="26.500" lengthAdjust="spacingAndGlyphs">H19</text>
<rect x="233.300" y="171" width="1" height="25" fill="#e2e2e2"/>
<text x="241.500" y="189.300" font-family="Liberation Sans,sans-serif" font-weight="bold" font-size="19" fill="#444">f</text>
<text x="248.500" y="189.300" font-family="Liberation Sans,sans-serif" font-weight="bold" font-size="14" fill="#444">x</text>
<text x="267" y="189.300" font-family="Liberation Sans,sans-serif" font-weight="bold" font-size="18" fill="#444" stroke="#444" stroke-width="0.500" textLength="11.500" lengthAdjust="spacingAndGlyphs">Σ</text>
<path d="M288.300 183h6.700l-3.350 3.700z" fill="#111"/>
<rect x="306" y="179.400" width="10" height="2.200" fill="#555"/><rect x="306" y="184.200" width="10" height="2.200" fill="#555"/>
<rect x="327" y="171" width="1" height="25" fill="#e2e2e2"/>
<rect x="331.500" y="172.500" width="618" height="23" fill="#fff" stroke="#c4c4c4"/>
<path d="M954.500 179.800h10.800l-5.400 6z" fill="#222"/>
</g>
</svg>
<div id="grid">
<div class="hl" style="top:55px"></div><div class="hl" style="top:72px"></div><div class="hl" style="top:89px"></div><div class="hl" style="top:106px"></div><div class="hl" style="top:123px"></div><div class="hl" style="top:140px"></div><div class="hl" style="top:157px"></div><div class="hl" style="top:174px"></div><div class="hl" style="top:191px"></div><div class="hl" style="top:208px"></div><div class="hl" style="top:225px"></div><div class="hl" style="top:242px"></div><div class="hl" style="top:259px"></div><div class="hl" style="top:276px"></div><div class="hl" style="top:293px"></div><div class="hl" style="top:310px"></div><div class="hl" style="top:327px"></div><div class="hl" style="top:344px"></div><div class="hl" style="top:361px"></div><div class="hl" style="top:378px"></div><div class="hl" style="top:395px"></div><div class="hl" style="top:412px"></div><div class="hl" style="top:429px"></div><div class="hl" style="top:446px"></div><div class="hl" style="top:463px"></div><div class="hl" style="top:480px"></div><div class="hl" style="top:497px"></div><div class="hl" style="top:514px"></div>
<div class="vl" style="left:205px"></div><div class="vl" style="left:287px"></div><div class="vl" style="left:369px"></div><div class="vl" style="left:451px"></div><div class="vl" style="left:533px"></div><div class="vl" style="left:615px"></div><div class="vl" style="left:697px"></div><div class="vl" style="left:779px"></div><div class="vl" style="left:861px"></div>
<div id="rowhdr"></div><div id="colhdr"></div>
<div class="a" style="left:40px;top:1px;width:1px;height:20px;background:#a0a0a0"></div><div class="a" style="left:205px;top:1px;width:1px;height:20px;background:#a0a0a0"></div><div class="a" style="left:287px;top:1px;width:1px;height:20px;background:#a0a0a0"></div><div class="a" style="left:369px;top:1px;width:1px;height:20px;background:#a0a0a0"></div><div class="a" style="left:451px;top:1px;width:1px;height:20px;background:#a0a0a0"></div><div class="a" style="left:533px;top:1px;width:1px;height:20px;background:#a0a0a0"></div><div class="a" style="left:615px;top:1px;width:1px;height:20px;background:#a0a0a0"></div><div class="a" style="left:697px;top:1px;width:1px;height:20px;background:#a0a0a0"></div><div class="a" style="left:779px;top:1px;width:1px;height:20px;background:#a0a0a0"></div><div class="a" style="left:861px;top:1px;width:1px;height:20px;background:#a0a0a0"></div>
<div class="ch" style="left:41px;top:1px;width:82px">A</div><div class="ch" style="left:125px;top:1px;width:80px">D</div><div class="ch" style="left:206px;top:1px;width:81px">E</div><div class="ch" style="left:288px;top:1px;width:81px">F</div><div class="ch" style="left:370px;top:1px;width:81px">G</div><div class="ch sel" style="left:451px;top:1px;width:83px;height:20px;line-height:20px">H</div><div class="ch" style="left:534px;top:1px;width:81px">I</div><div class="ch" style="left:616px;top:1px;width:81px">J</div><div class="ch" style="left:698px;top:1px;width:81px">K</div><div class="ch" style="left:780px;top:1px;width:81px">L</div>
<div class="rh" style="top:21px">1</div><div class="rh" style="top:39px">14</div><div class="a" style="left:0;top:55px;width:40px;height:1px;background:#acacac"></div><div class="rh" style="top:56px">15</div><div class="a" style="left:0;top:72px;width:40px;height:1px;background:#acacac"></div><div class="rh" style="top:73px">16</div><div class="a" style="left:0;top:89px;width:40px;height:1px;background:#acacac"></div><div class="rh" style="top:90px">17</div><div class="a" style="left:0;top:106px;width:40px;height:1px;background:#acacac"></div><div class="rh" style="top:107px">18</div><div class="a" style="left:0;top:123px;width:40px;height:1px;background:#acacac"></div><div class="rh sel" style="width:41px;height:17px;top:123px;line-height:18px">19</div><div class="a" style="left:0;top:140px;width:40px;height:1px;background:#acacac"></div><div class="rh" style="top:141px">20</div><div class="a" style="left:0;top:157px;width:40px;height:1px;background:#acacac"></div><div class="rh" style="top:158px">21</div><div class="a" style="left:0;top:174px;width:40px;height:1px;background:#acacac"></div><div class="rh" style="top:175px">22</div><div class="a" style="left:0;top:191px;width:40px;height:1px;background:#acacac"></div><div class="rh" style="top:192px">23</div><div class="a" style="left:0;top:208px;width:40px;height:1px;background:#acacac"></div><div class="rh" style="top:209px">24</div><div class="a" style="left:0;top:225px;width:40px;height:1px;background:#acacac"></div><div class="rh" style="top:226px">25</div><div class="a" style="left:0;top:242px;width:40px;height:1px;background:#acacac"></div><div class="rh" style="top:243px">26</div><div class="a" style="left:0;top:259px;width:40px;height:1px;background:#acacac"></div><div class="rh" style="top:260px">27</div><div class="a" style="left:0;top:276px;width:40px;height:1px;background:#acacac"></div><div class="rh" style="top:277px">28</div><div class="a" style="left:0;top:293px;width:40px;height:1px;background:#acacac"></div><div class="rh" style="top:294px">29</div><div class="a" style="left:0;top:310px;width:40px;height:1px;background:#acacac"></div><div class="rh" style="top:311px">30</div><div class="a" style="left:0;top:327px;width:40px;height:1px;background:#acacac"></div><div class="rh" style="top:328px">31</div><div class="a" style="left:0;top:344px;width:40px;height:1px;background:#acacac"></div><div class="rh" style="top:345px">32</div><div class="a" style="left:0;top:361px;width:40px;height:1px;background:#acacac"></div><div class="rh" style="top:362px">33</div><div class="a" style="left:0;top:378px;width:40px;height:1px;background:#acacac"></div><div class="rh" style="top:379px">34</div><div class="a" style="left:0;top:395px;width:40px;height:1px;background:#acacac"></div><div class="rh" style="top:396px">35</div><div class="a" style="left:0;top:412px;width:40px;height:1px;background:#acacac"></div><div class="rh" style="top:413px">36</div><div class="a" style="left:0;top:429px;width:40px;height:1px;background:#acacac"></div><div class="rh" style="top:430px">37</div><div class="a" style="left:0;top:446px;width:40px;height:1px;background:#acacac"></div><div class="rh" style="top:447px">38</div><div class="a" style="left:0;top:463px;width:40px;height:1px;background:#acacac"></div><div class="rh" style="top:464px">39</div><div class="a" style="left:0;top:480px;width:40px;height:1px;background:#acacac"></div><div class="rh" style="top:481px">40</div><div class="a" style="left:0;top:497px;width:40px;height:1px;background:#acacac"></div><div class="rh" style="top:498px">41</div><div class="a" style="left:0;top:514px;width:40px;height:1px;background:#acacac"></div>
<div class="a" style="left:122px;top:21px;width:1px;height:488px;background:rgba(0,0,0,0.13)"></div><div class="a" style="left:41px;top:37px;width:852px;height:1px;background:rgba(0,0,0,0.13)"></div><div class="a" style="left:123px;top:0;width:1px;height:509px;background:#000"></div><div class="a" style="left:0;top:38px;width:893px;height:1px;background:#000"></div>
<div class="ct" style="left:42.0px;top:22px">ааа</div><div class="ct" style="left:206.3px;top:22px">ааа1234</div><div class="ct" style="left:370.8px;top:22px">ааа567</div><div class="ct" style="left:42.0px;top:57px"><u class="sq">иии</u></div><div class="ct" style="left:206.3px;top:57px">иии1234</div><div class="ct" style="left:370.8px;top:57px">иии567</div><div class="ct" style="left:42.0px;top:91px"><u class="sq"><span class="kk">ккк</span></u></div><div class="ct" style="left:206.3px;top:91px"><span class="kk">ккк</span>1234</div><div class="ct" style="left:370.8px;top:91px"><span class="kk">ккк</span>567</div>
<div class="a" style="left:451px;top:123px;width:83px;height:18px;border:2px solid #000"></div><div class="a" style="left:531px;top:138px;width:5px;height:5px;background:#000"></div>
</div>
<!-- scrollbars -->
<div class="a" style="left:72px;top:710px;width:893px;height:11px;background:#d2d2d2"></div>
<div class="a" style="left:157px;top:713px;width:358px;height:6px;border-radius:3px;background:#8c8c8c"></div>
<div class="a" style="left:965px;top:201px;width:12px;height:509px;background:#d2d2d2"></div>
<div class="a" style="left:968px;top:296px;width:6px;height:194px;border-radius:3px;background:#8c8c8c"></div>
<div class="a" style="left:965px;top:710px;width:12px;height:11px;background:#f6f6f6"></div>
<!-- sheet tab bar -->
<div class="a" style="left:215px;top:722px;width:60px;height:25px;background:#fff;border-bottom:3px solid #a9a9a9;color:#3d3d3d;font-size:12.8px;letter-spacing:-0.55px;padding-right:3px;text-align:center;line-height:23px">Лист1</div>
<svg style="left:72px;top:721px" width="160" height="27" viewBox="72 721 160 27">
<g fill="#b9b9b9"><rect x="85.500" y="727" width="1.600" height="14"/><path d="M95.500 727v14l-8-7z"/><path d="M119 727v14l-8-7z"/><path d="M136 727v14l8-7z"/><path d="M160 727v14l8-7z"/><rect x="168" y="727" width="1.600" height="14"/></g>
<path d="M196.500 726v17M188 734.500h17" stroke="#333" stroke-width="3" fill="none"/>
</svg>
<!-- status bar -->
<div class="a" id="status" style="left:72px;top:747px;width:952px;height:21px;border-top:1px solid #c9c9c9;background:#f6f6f6;color:#3d3d3d;font-size:12.8px;white-space:nowrap">
<span class="a" style="left:11px;top:3px;letter-spacing:-0.5px">Лист 1 из 1</span>
<span class="a" style="left:215px;top:3px;letter-spacing:-0.82px">Стандарт</span>
<span class="a" style="left:326px;top:3px;letter-spacing:-0.33px">Русский</span>
<span class="a" style="left:569.500px;top:3px;letter-spacing:-0.47px">Среднее значение: ; Сумма: 0</span>
<span class="a" style="left:909px;top:3px;letter-spacing:-0.9px;word-spacing:1.5px">100 %</span>
<i class="sp" style="left:104px"></i><i class="sp" style="left:206px"></i><i class="sp" style="left:302px"></i><i class="sp" style="left:391px"></i><i class="sp" style="left:459px"></i><i class="sp" style="left:488px"></i><i class="sp" style="left:518px"></i><i class="sp" style="left:546px"></i><i class="sp" style="left:757px"></i><i class="sp" style="left:899px"></i>
</div>
<svg style="left:530px;top:748px" width="494" height="20" viewBox="530 748 494 20">
<path d="M539.500 753.500h3.500M541.200 753.500v9.500M539.500 763h3.500M547 762v1.500h6.500v-1.500" fill="none" stroke="#8a8a8a" stroke-width="1.100"/>
<rect x="569.500" y="753.500" width="11.500" height="9.500" fill="#f4f4f4" stroke="#a5a5a5"/>
<path d="M574 755h2.800v2.500h2l-3.400 3.800l-3.400-3.800h2z" fill="#f59a1c" stroke="#d8720a" stroke-width="0.700"/>
<path d="M839 758.500h8.500M855 758.500h95M956 758.500h8.600M960.300 754.200v8.600" stroke="#8a8a8a" stroke-width="1.100" fill="none"/>
<circle cx="901.500" cy="758.500" r="4.800" fill="#f2f2f2" stroke="#8a8a8a" stroke-width="1"/>
</svg>
<!-- sidebar -->
<div class="a" style="left:977px;top:167px;width:47px;height:580px;background:#f6f6f6;border-top:1px solid #c8c8c8;border-left:1px solid #ababab"></div>
<div class="a" style="left:978px;top:168px;width:6px;height:579px;background:#fff;border-right:1px solid #ababab"></div>
<div class="a" style="left:977px;top:420px;width:7px;height:73px;background:#9b9b9b"></div>
<svg style="left:977px;top:167px" width="47" height="260" viewBox="977 167 47 260">
<path d="M978.600 453.500v6l4-3z" fill="#fff"/>
<!-- gear -->
<g transform="translate(1003.600 186) scale(0.880)">
<path id="gear" d="M-2 -10.500h4l0.600 2.600l2 0.900l2.300-1.400l2.800 2.800l-1.400 2.300l0.900 2l2.600 0.600v4l-2.600 0.600l-0.900 2l1.400 2.300l-2.800 2.800l-2.300-1.400l-2 0.900l-0.600 2.600h-4l-0.600-2.600l-2-0.900l-2.300 1.400l-2.800-2.800l1.400-2.300l-0.900-2l-2.600-0.600v-4l2.600-0.600l0.900-2l-1.400-2.300l2.800-2.800l2.300 1.400l2-0.900z" fill="#eaeaea" stroke="#858585" stroke-width="1" stroke-linejoin="round"/>
<circle r="6.200" fill="#dddddd" stroke="#cdcdcd" stroke-width="0.800"/><circle r="3.300" fill="#fafafa" stroke="#8c8c8c" stroke-width="0.900"/>
</g>
<rect x="990" y="206" width="28" height="1" fill="#e4e4e4"/>
<rect x="988.500" y="210.500" width="31" height="31" rx="4" fill="#f9f9f9" stroke="#cbcbcb"/>
<rect x="994.500" y="216.500" width="19" height="19" fill="url(#gGrey)" stroke="#ababab"/>
<rect x="997" y="223.200" width="14" height="7.200" rx="3.600" fill="#3584e4"/>
<circle cx="1007.800" cy="226.800" r="2.700" fill="#fff"/>
<!-- styles -->
<text x="992.500" y="264.800" font-family="Liberation Sans,sans-serif" font-weight="bold" font-size="21" fill="#3c3c3c">A</text>
<path d="M1016.200 254.800l-9.300 12l-2.600-2z" fill="#b8702e" stroke="#8a4a16" stroke-width="0.600"/>
<path d="M1006.900 266.800l-2.600-2c-1.800 1-2 3.500-3.600 5.700c3 0.400 5.300-1.200 6.200-3.700z" fill="#e24fc0"/>
<!-- gallery -->
<g transform="rotate(-7 1004 296)"><rect x="993.500" y="287.500" width="20" height="16.500" fill="#e8f1fa" stroke="#3a78b8" stroke-width="1.100"/></g>
<rect x="994.500" y="290" width="20.500" height="15.500" fill="#f4f4f4" stroke="#9a9a9a" stroke-width="0.900"/>
<rect x="996.200" y="291.700" width="17.200" height="12.200" fill="#f0bc6a"/>
<path d="M996.200 291.700h17.200v5.300c-3 1.300-5-0.800-8 0.300s-5.500 1.300-9.200 0.500z" fill="url(#gSky)"/>
<path d="M1000 298.500l0.700 1.500h1.600l-1.300 1.100l0.500 1.700l-1.500-1l-1.500 1l0.500-1.700l-1.300-1.100h1.600z" fill="#e8401c"/>
<!-- navigator -->
<circle cx="1003.700" cy="330.800" r="10.200" fill="#3c4868" stroke="#8f8f8f" stroke-width="2"/>
<circle cx="1003.700" cy="330.800" r="8.200" fill="none" stroke="#c9c9c9" stroke-width="0.700"/>
<path d="M1003.700 330.800l-6.500-5l8 3.400z" fill="#e83a3a"/><path d="M1003.700 330.800l4.500-6.500l-2.800 7.800z" fill="#e83a3a"/>
<path d="M1003.700 330.800l6.500 5l-8-3.400z" fill="#fff"/><path d="M1003.700 330.800l-4.500 6.500l2.800-7.800z" fill="#fff"/>
<!-- functions -->
<text x="995.800" y="373.300" font-family="Liberation Sans,sans-serif" font-size="21.500" fill="#333" stroke="#333" stroke-width="0.400">f</text>
<text x="1003.300" y="375.500" font-family="Liberation Sans,sans-serif" font-size="10.500" fill="#333">(x)</text>
</svg>
</body></html>
